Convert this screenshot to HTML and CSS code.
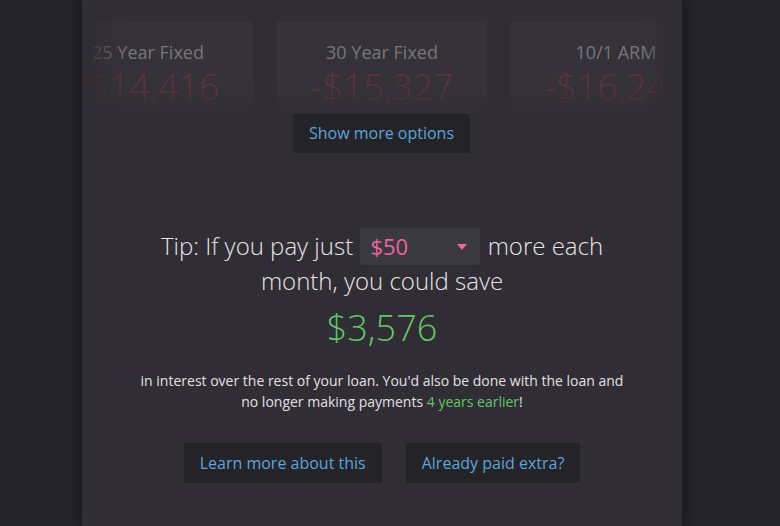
FILE: index.html
```html
<!DOCTYPE html>
<html>
<head>
<meta charset="utf-8">
<link rel="stylesheet" href="styles.css">
</head>
<body>
<div class="panel">
  <div class="carousel">
    <div class="track">
      <div class="card">
        <div class="card-title">25 Year Fixed</div>
        <div class="card-value">-$14,416</div>
      </div>
      <div class="card">
        <div class="card-title">30 Year Fixed</div>
        <div class="card-value">-$15,327</div>
      </div>
      <div class="card">
        <div class="card-title">10/1 ARM</div>
        <div class="card-value">-$16,249</div>
      </div>
    </div>
    <div class="fade"></div>
  </div>
  <div class="center-row">
    <button class="btn">Show more options</button>
  </div>

  <div class="tip">
    <p class="tip-line">Tip: If you pay just <span class="select"><span class="select-value">$50</span><span class="caret"></span></span> more each month, you could save</p>
    <div class="savings">$3,576</div>
    <p class="tip-desc">in interest over the rest of your loan. You'd also be done with the loan and no longer making payments <span class="green">4 years earlier</span>!</p>
  </div>

  <div class="actions">
    <button class="btn btn-lg">Learn more about this</button>
    <button class="btn btn-lg">Already paid extra?</button>
  </div>
</div>
</body>
</html>
```

FILE: styles.css
```css
html, body {
  margin: 0;
  padding: 0;
  height: 100%;
}
body {
  background: #25232b;
  font-family: "Open Sans", "Liberation Sans", sans-serif;
  overflow: hidden;
}
.panel {
  width: 600px;
  height: 526px;
  margin-left: 82px;
  background: #302d34;
  box-shadow: -6px 0 14px rgba(0, 0, 0, 0.18), 6px 0 14px rgba(0, 0, 0, 0.18);
}
.carousel {
  position: relative;
  margin: 0 15px 0 8px;
  padding-top: 21px;
  height: 92px;
  overflow: hidden;
}
.track {
  display: flex;
  gap: 24px;
  margin-left: -47px;
}
.card {
  flex: 0 0 210px;
  height: 100px;
  background: #35323a;
  text-align: center;
  padding-top: 19px;
  box-sizing: border-box;
}
.card-title {
  font-size: 18px;
  line-height: 24px;
  color: #79757d;
}
.card-value {
  margin-top: 3px;
  font-size: 36px;
  font-weight: 300;
  line-height: 40px;
  color: #5f3239;
}
.fade {
  position: absolute;
  inset: 0;
  background:
    linear-gradient(to right, #302d34 0, rgba(48, 45, 52, 0.75) 6px, rgba(48, 45, 52, 0.3) 22px, rgba(48, 45, 52, 0) 40px, rgba(48, 45, 52, 0) calc(100% - 22px), rgba(48, 45, 52, 0.6) calc(100% - 8px), #302d34 100%),
    linear-gradient(to bottom, rgba(48, 45, 52, 0) 75%, rgba(48, 45, 52, 0.85) 100%);
}
.center-row {
  display: flex;
  justify-content: center;
  margin-top: 1px;
}
.btn {
  font-family: "Open Sans", "Liberation Sans", sans-serif;
  font-size: 16px;
  color: #5ba6dc;
  background: #242328;
  border: none;
  border-radius: 2px;
  padding: 0 16px;
  height: 39px;
  line-height: 39px;
  cursor: pointer;
}
.center-row .btn {
  margin-left: -1px;
}
.tip {
  text-align: center;
  margin-top: 75px;
}
.tip-line {
  margin: 0 auto;
  width: 460px;
  font-size: 24px;
  font-weight: 300;
  line-height: 35px;
  color: #e6e4e9;
}
.select {
  display: inline-flex;
  align-items: center;
  justify-content: space-between;
  vertical-align: middle;
  width: 120px;
  height: 37px;
  box-sizing: border-box;
  padding: 0 13px 0 10px;
  margin: -6px 1px -2px;
  background: #3a3840;
  border-radius: 2px;
  text-align: left;
}
.select-value {
  color: #ec65a0;
  font-weight: 400;
  font-size: 22px;
}
.caret {
  width: 0;
  height: 0;
  border-left: 5px solid transparent;
  border-right: 5px solid transparent;
  border-top: 6px solid #ec65a0;
}
.savings {
  margin-top: 6px;
  font-size: 36px;
  font-weight: 300;
  line-height: 48px;
  color: #60c767;
}
.tip-desc {
  margin: 18px auto 0;
  width: 500px;
  font-size: 14px;
  line-height: 21px;
  color: #e2e0e5;
}
.green {
  color: #60c767;
}
.actions {
  display: flex;
  justify-content: center;
  gap: 24px;
  margin-top: 31px;
}
.btn-lg {
  height: 40px;
  line-height: 40px;
}
```
